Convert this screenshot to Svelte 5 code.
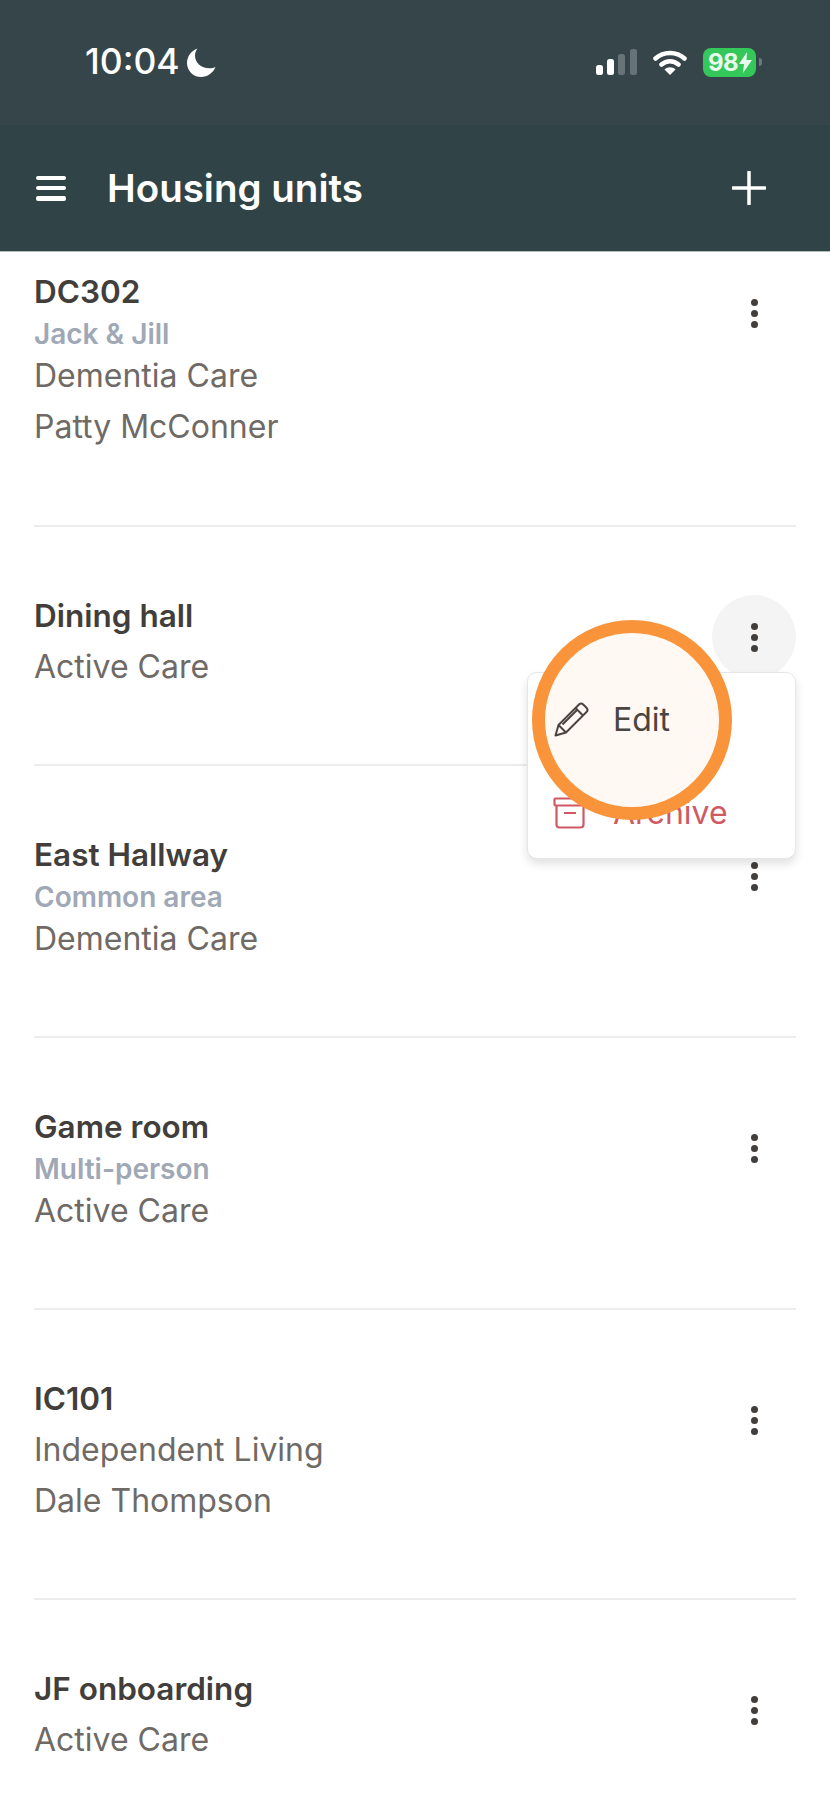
<script>
    const units = [
        { name: 'DC302', tag: 'Jack & Jill', meta: ['Dementia Care', 'Patty McConner'] },
        { name: 'Dining hall', meta: ['Active Care'], open: true },
        { name: 'East Hallway', tag: 'Common area', meta: ['Dementia Care'] },
        { name: 'Game room', tag: 'Multi-person', meta: ['Active Care'] },
        { name: 'IC101', meta: ['Independent Living', 'Dale Thompson'] },
        { name: 'JF onboarding', meta: ['Active Care'] },
    ];
</script>

<div class="screen">
    <header class="top">
        <div class="status">
            <div class="clock">
                <span>10:04</span>
                <svg width="29" height="29" viewBox="0 0 29 29"><path d="M10.5 0.5C4.3 2.6 0 8.3 0 15c0 7.8 6.2 14 14 14 6.5 0 11.9-3.9 14.5-10-1.5.8-3.9 1.3-6 1.3C13.600 20.300 8 14.300 8 7.500 8 5 9 2.500 10.500.5z" fill="#fff"/></svg>
            </div>
            <div class="indicators">
                <svg width="41" height="26" viewBox="0 0 41 26">
                    <rect x="0" y="16" width="7" height="10" rx="2.500" fill="#fff"/>
                    <rect x="11" y="10" width="7" height="16" rx="2.500" fill="#fff"/>
                    <rect x="22" y="5" width="7" height="21" rx="2.500" fill="#667477"/>
                    <rect x="34" y="0" width="7" height="26" rx="2.500" fill="#667477"/>
                </svg>
                <svg class="wifi" width="34" height="26" viewBox="0 0 34 26">
                    <path d="M2.500 9.500C10.500 2 23.500 2 31.500 9.500M8.500 15.500C13.500 11 20.500 11 25.500 15.500" fill="none" stroke="#fff" stroke-width="4.500" stroke-linecap="round"/>
                    <path d="M11.500 20.500C14.500 17.500 19.500 17.500 22.500 20.500L17 26z" fill="#fff"/>
                </svg>
                <div class="battery"><span>98</span><svg width="13" height="21" viewBox="0 0 13 21"><path d="M8 0L0 12h5L4 21l9-13H7.500z" fill="#e9f9ee"/></svg></div>
                <i class="nub"></i>
            </div>
        </div>
        <div class="toolbar">
            <button class="menu-btn" aria-label="Menu"><i></i><i></i><i></i></button>
            <h1>Housing units</h1>
            <button class="add" aria-label="Add">
                <svg width="34" height="34" viewBox="0 0 34 34"><path d="M17 1v32M1 17h32" stroke="#fff" stroke-width="3.500" stroke-linecap="round"/></svg>
            </button>
        </div>
    </header>

    <main class="list">
        {#each units as unit}
            <section class="row" class:open={unit.open}>
                <div class="info">
                    <div class="name">{unit.name}</div>
                    {#if unit.tag}<div class="tag">{unit.tag}</div>{/if}
                    {#each unit.meta as line}
                        <div class="meta">{line}</div>
                    {/each}
                </div>
                <button class="kebab" class:active={unit.open} aria-label="More">
                    <i></i><i></i><i></i>
                </button>
                {#if unit.open}
                    <div class="popup">
                        <div class="item edit">
                            <svg width="36" height="36" viewBox="0 0 36 36" fill="none" stroke="#4a4540" stroke-width="2" stroke-linejoin="round">
                                <path d="M2.500 33.500l3-10.500L26 2.500a3 3 0 0 1 4.200 0l3.300 3.300a3 3 0 0 1 0 4.200L13 30.500z"/>
                                <path d="M5.500 23l7.500 7.500M22.500 6l7.500 7.500M9.500 22.500L25 7"/>
                            </svg>
                            <span>Edit</span>
                        </div>
                        <div class="item danger">
                            <svg width="34" height="32" viewBox="0 0 34 32" fill="none" stroke="#cf5a63" stroke-width="2.200" stroke-linejoin="round">
                                <rect x="1.500" y="1.500" width="31" height="7" rx="1"/>
                                <path d="M3.500 8.500v19a3 3 0 0 0 3 3h21a3 3 0 0 0 3-3v-19M11 16h12"/>
                            </svg>
                            <span>Archive</span>
                        </div>
                    </div>
                    <div class="spot"></div>
                {/if}
            </section>
        {/each}
    </main>
</div>

<style>
    :global(body) {
        margin: 0;
        background: #fff;
    }
    .screen {
        width: 830px;
        height: 1799px;
        overflow: hidden;
        font-family: Inter, "Liberation Sans", sans-serif;
    }
    button {
        border: 0;
        padding: 0;
        background: none;
    }
    .top {
        height: 252px;
        box-sizing: border-box;
        border-bottom: 1px solid #b5bcbc;
        color: #fff;
        background: #304346;
    }
    .status {
        height: 125px;
        box-sizing: border-box;
        padding: 47px 68px 0 85px;
        background: #364549;
        display: flex;
        justify-content: space-between;
        align-items: flex-start;
    }
    .clock {
        display: flex;
        align-items: center;
        gap: 7px;
        height: 30px;
        font: 500 35.500px/30px Inter, sans-serif;
    }
    .indicators {
        display: flex;
        align-items: center;
        height: 30px;
    }
    .wifi {
        margin-left: 16px;
    }
    .battery {
        margin-left: 16px;
        width: 53px;
        height: 29px;
        box-sizing: border-box;
        padding-left: 5px;
        border-radius: 8px;
        background: #34c759;
        color: #e9f9ee;
        display: flex;
        align-items: center;
        gap: 1px;
        font: 700 24px/29px Inter, sans-serif;
        letter-spacing: -0.500px;
    }
    .nub {
        margin-left: 3px;
        width: 3px;
        height: 8px;
        border-radius: 0 3px 3px 0;
        background: #6b7a7c;
    }
    .toolbar {
        height: 126px;
        box-sizing: border-box;
        padding: 0 64px 0 36px;
        display: flex;
        align-items: center;
    }
    .menu-btn {
        width: 30px;
        height: 25px;
        display: flex;
        flex-direction: column;
        justify-content: space-between;
    }
    .menu-btn i {
        display: block;
        height: 4.500px;
        border-radius: 2px;
        background: #fff;
    }
    h1 {
        margin: 0 0 0 41px;
        flex: 1;
        font: 600 38.500px/44px Inter, sans-serif;
    }
    .add {
        height: 34px;
    }
    .list {
        padding: 0 34px;
    }
    .row {
        position: relative;
        display: flex;
        align-items: flex-start;
        justify-content: space-between;
        padding: 74px 0 82px;
        border-bottom: 2px solid #ececec;
    }
    .row.open {
        z-index: 1;
    }
    .row:first-child {
        padding-top: 25px;
        padding-bottom: 83px;
    }
    .row:last-child {
        border-bottom: 0;
    }
    .name {
        font-weight: 600;
        font-size: 31.500px;
        line-height: 30px;
        color: #413e3b;
    }
    .tag {
        margin-top: 15px;
        font-weight: 600;
        font-size: 28px;
        line-height: 24px;
        color: #a0a8b6;
    }
    .meta {
        margin-top: 21px;
        font-size: 32px;
        line-height: 30px;
        color: #6f6a65;
    }
    .tag + .meta {
        margin-top: 15px;
    }
    .kebab {
        margin-top: -6px;
        width: 84px;
        height: 84px;
        border-radius: 50%;
        display: flex;
        flex-direction: column;
        align-items: center;
        justify-content: center;
        gap: 4px;
    }
    .kebab.active {
        background: #f4f4f4;
    }
    .kebab i {
        width: 7px;
        height: 7px;
        border-radius: 50%;
        background: #413e3b;
    }
    .popup {
        position: absolute;
        right: 0;
        top: 145px;
        width: 269px;
        height: 187px;
        box-sizing: border-box;
        border: 1.500px solid #e6e6e6;
        border-radius: 10px;
        background: #fff;
        box-shadow: 0 5px 10px rgba(0, 0, 0, 0.12);
    }
    .item {
        height: 93px;
        box-sizing: border-box;
        padding-left: 25px;
        display: flex;
        align-items: center;
        gap: 24px;
        font-size: 32px;
        color: #4a4540;
    }
    .item svg {
        flex: none;
    }
    .edit {
        position: relative;
        z-index: 4;
    }
    .danger {
        gap: 26px;
        color: #cf5a63;
    }
    .spot {
        position: absolute;
        z-index: 3;
        left: 498px;
        top: 93px;
        width: 200px;
        height: 200px;
        box-sizing: border-box;
        border: 13px solid #f9943b;
        border-radius: 50%;
        background: #fff8f3;
    }
</style>
